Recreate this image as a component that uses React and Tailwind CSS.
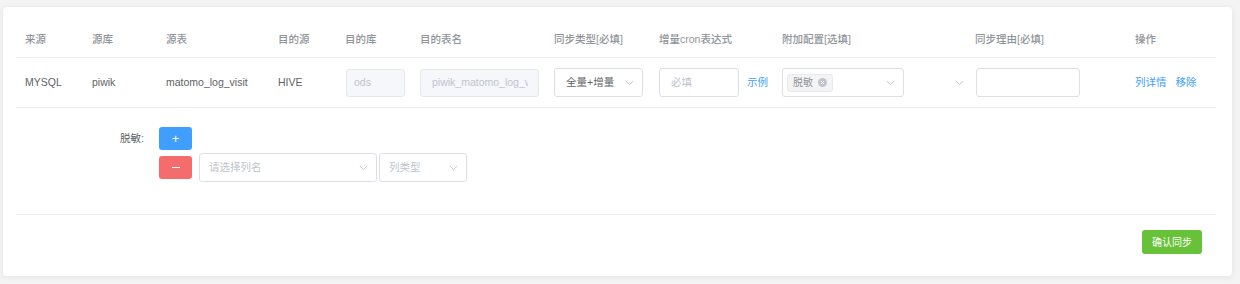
import React from "react";

const FONT = { fontFamily: '"Liberation Sans", Arial, "Noto Sans CJK SC", sans-serif' };

function Chevron({ className = "" }) {
  return (
    <svg width="9" height="6" viewBox="0 0 9 6" className={className}>
      <path d="M0.8 1 L4.5 4.6 L8.2 1" fill="none" stroke="#c0c4cc" strokeWidth="0.9" />
    </svg>
  );
}

const headers = [
  "来源",
  "源库",
  "源表",
  "目的源",
  "目的库",
  "目的表名",
  "同步类型[必填]",
  "增量cron表达式",
  "附加配置[选填]",
  "同步理由[必填]",
  "操作",
];

const GRID =
  "grid grid-cols-[67px_74px_112px_67px_75px_134px_105px_123px_193px_160px_90px]";

export default function App() {
  return (
    <div
      className="w-[1240px] h-[284px] bg-[#f4f4f4] pt-[7px] pl-[3px] text-[10.5px]"
      style={FONT}
    >
      <div className="w-[1229px] h-[269px] bg-white rounded-[4px] shadow-[0_1px_6px_0_rgba(0,0,0,0.08)] pl-[13px] pr-[16px] pt-[15px]">
        {/* header */}
        <div className={`${GRID} h-[36px] items-center border-b border-[#ebeef5]`}>
          {headers.map((h) => (
            <div key={h} className="pl-[9px] text-[#909399] font-medium whitespace-nowrap">
              {h}
            </div>
          ))}
        </div>

        {/* body row */}
        <div className={`${GRID} h-[50px] items-center border-b border-[#ebeef5] text-[#606266]`}>
          <div className="pl-[9px]">MYSQL</div>
          <div className="pl-[9px]">piwik</div>
          <div className="pl-[9px]">matomo_log_visit</div>
          <div className="pl-[9px]">HIVE</div>
          <div className="pl-[10px]">
            <div className="w-[59px] h-[28px] rounded-[3px] border border-[#e4e7ed] bg-[#f5f7fa] text-[#c0c4cc] flex items-center pl-[7px]">
              ods
            </div>
          </div>
          <div className="pl-[9px]">
            <div className="w-[119px] h-[28px] rounded-[3px] border border-[#e4e7ed] bg-[#f5f7fa] text-[#c0c4cc] flex items-center pl-[11px] pr-[10px] overflow-hidden whitespace-nowrap">
              <span className="block overflow-hidden">piwik_matomo_log_visit</span>
            </div>
          </div>
          <div className="pl-[9px]">
            <div className="w-[89px] h-[29px] rounded-[3px] border border-[#dcdfe6] flex items-center justify-between pl-[11px] pr-[8px] text-[#606266]">
              <span>全量+增量</span>
              <Chevron />
            </div>
          </div>
          <div className="pl-[9px] flex items-center">
            <div className="w-[80px] h-[29px] rounded-[3px] border border-[#dcdfe6] flex items-center pl-[11px] text-[#c0c4cc]">
              必填
            </div>
            <span className="ml-[8px] text-[#409eff]">示例</span>
          </div>
          <div className="pl-[9px] flex items-center">
            <div className="w-[122px] h-[29px] rounded-[3px] border border-[#dcdfe6] flex items-center justify-between pl-[4px] pr-[8px]">
              <div className="h-[18px] px-[5px] bg-[#f4f4f5] border border-[#e9e9eb] rounded-[3px] flex items-center gap-[5px] text-[#909399] text-[10px]">
                <span>脱敏</span>
                <span className="w-[9px] h-[9px] rounded-full bg-[#c0c4cc] flex items-center justify-center">
                  <svg width="5" height="5" viewBox="0 0 5 5">
                    <path d="M1 1 L4 4 M4 1 L1 4" stroke="#fff" strokeWidth="0.9" />
                  </svg>
                </span>
              </div>
              <Chevron />
            </div>
            <Chevron className="ml-auto mr-[2px]" />
          </div>
          <div className="pl-[10px]">
            <div className="w-[104px] h-[29px] rounded-[3px] border border-[#dcdfe6]" />
          </div>
          <div className="pl-[9px] flex items-center gap-[9px] text-[#409eff]">
            <span>列详情</span>
            <span>移除</span>
          </div>
        </div>

        {/* form */}
        <div className="flex pt-[19px] pb-[32px] border-b border-[#ebeef5]">
          <div className="w-[143px] pr-[15px] text-right leading-[23px] text-[#606266]">脱敏:</div>
          <div className="flex flex-col gap-[3px]">
            <div className="w-[33px] h-[23px] rounded-[3px] bg-[#409eff] text-white flex items-center justify-center text-[13px] leading-none">
              +
            </div>
            <div className="flex items-center h-[29px]">
              <div className="w-[33px] h-[23px] rounded-[3px] bg-[#f56c6c] text-white flex items-center justify-center">
                <span className="block w-[8px] h-[1px] bg-white" />
              </div>
              <div className="ml-[7px] w-[178px] h-[29px] rounded-[3px] border border-[#dcdfe6] flex items-center justify-between pl-[9px] pr-[8px] text-[#c0c4cc]">
                <span>请选择列名</span>
                <Chevron />
              </div>
              <div className="ml-[2px] w-[88px] h-[29px] rounded-[3px] border border-[#dcdfe6] flex items-center justify-between pl-[9px] pr-[8px] text-[#c0c4cc]">
                <span>列类型</span>
                <Chevron />
              </div>
            </div>
          </div>
        </div>

        {/* footer */}
        <div className="flex justify-end pt-[15px] pr-[14px]">
          <div className="w-[60px] h-[24px] rounded-[3px] bg-[#67c23a] text-white text-[10px] flex items-center justify-center">
            确认同步
          </div>
        </div>
      </div>
    </div>
  );
}
